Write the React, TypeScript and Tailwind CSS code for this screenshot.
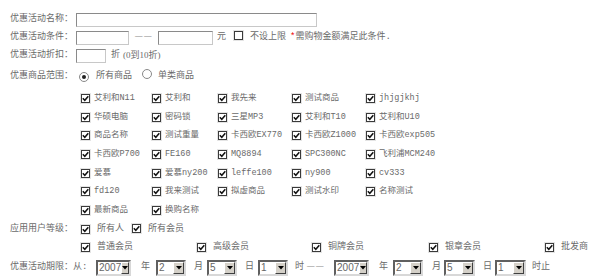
import React from "react";

const products = [
  ["艾利和N11", "艾利和", "我先来", "测试商品", "jhjgjkhj"],
  ["华硕电脑", "密码锁", "三星MP3", "艾利和T10", "艾利和U10"],
  ["商品名称", "测试重量", "卡西欧EX770", "卡西欧Z1000", "卡西欧exp505"],
  ["卡西欧P700", "FE160", "MQ8894", "SPC300NC", "飞利浦MCM240"],
  ["爱慕", "爱慕ny200", "leffe100", "ny900", "cv333"],
  ["fd120", "我来测试", "拟虚商品", "测试水印", "名称测试"],
  ["最新商品", "换购名称"],
];

const levels = ["普通会员", "高级会员", "铜牌会员", "银章会员", "批发商"];

const dash = { fontFamily: "'Liberation Sans', sans-serif" };

function Box({ checked = true }: { checked?: boolean }) {
  return (
    <span className="inline-flex h-[11px] w-[11px] shrink-0 items-center justify-center border border-[#e4e4e4] bg-[#f6f6f6]">
      <span className="flex h-[9px] w-[9px] items-center justify-center border border-[#3a3a3a] bg-white">
        {checked && (
          <svg width="7" height="7" viewBox="0 0 7 7">
            <path d="M0.8 3.2 L2.8 5.3 L6.3 1.2" stroke="#111" strokeWidth="1.5" fill="none" />
          </svg>
        )}
      </span>
    </span>
  );
}

function Radio({ on }: { on?: boolean }) {
  return (
    <span className="inline-flex h-[10px] w-[10px] shrink-0 items-center justify-center rounded-full border border-[#888] bg-white">
      {on && <span className="h-[4px] w-[4px] rounded-full bg-[#222]" />}
    </span>
  );
}

function Field({ w }: { w: string }) {
  return (
    <span
      className={
        "inline-block h-[14px] border border-t-[#8a8a8a] border-l-[#8a8a8a] border-b-[#c8c8c8] border-r-[#c8c8c8] bg-white " +
        w
      }
    />
  );
}

function Sel({ v, w }: { v: string; w: string }) {
  return (
    <span
      className={
        "inline-flex h-[16px] shrink-0 items-stretch border-2 border-t-[#606060] border-l-[#606060] border-b-[#d8d8d8] border-r-[#d8d8d8] bg-white " +
        w
      }
    >
      <span className="flex-1 pl-[1px] text-[10px] leading-[12px] text-[#666]" style={{ fontFamily: "'Liberation Sans', sans-serif" }}>
        {v}
      </span>
      <span className="flex w-[11px] items-center justify-center border border-t-white border-l-white border-b-[#404040] border-r-[#404040] bg-[#d4d0c8]">
        <svg width="6" height="4" viewBox="0 0 6 4">
          <path d="M0 0 H6 L3 3.5 Z" fill="#000" />
        </svg>
      </span>
    </span>
  );
}

export default function App() {
  return (
    <div
      className="h-[279px] w-[600px] overflow-hidden bg-white pl-[10px] pt-[11px] text-[9px] text-[#6a6a6a]"
      style={{ fontFamily: "'Liberation Mono', 'Noto Sans CJK SC', monospace" }}
    >
      <div className="flex h-[18px] items-center">
        <span className="w-[66px]">优惠活动名称：</span>
        <Field w="w-[241px]" />
      </div>
      <div className="flex h-[18px] items-center">
        <span className="w-[66px]">优惠活动条件：</span>
        <Field w="w-[53px]" />
        <span className="ml-[6px] w-[23px] -translate-y-[2px] whitespace-nowrap text-[7.5px] tracking-[1.5px] text-[#888]" style={dash}>——</span>
        <Field w="w-[55px]" />
        <span className="ml-[4px]">元</span>
        <span className="ml-[7px]"><Box checked={false} /></span>
        <span className="ml-[6px]">不设上限</span>
        <span className="ml-[4px] text-[#e00]">*</span>
        <span>需购物金额满足此条件.</span>
      </div>
      <div className="flex h-[17px] items-center">
        <span className="w-[66px]">优惠活动折扣：</span>
        <Field w="w-[30px]" />
        <span className="ml-[5px]">折</span>
        <span className="ml-[3px]" style={{ fontFamily: "'Liberation Serif', 'Noto Sans CJK SC', serif" }}>(0到10折)</span>
      </div>
      <div className="flex h-[25px] items-center">
        <span className="w-[69px]">优惠商品范围：</span>
        <Radio on />
        <span className="ml-[7px]">所有商品</span>
        <span className="ml-[10px]"><Radio /></span>
        <span className="ml-[6px]">单类商品</span>
      </div>
      <div className="ml-[70px] grid grid-cols-[71px_66px_74px_74px_1fr] auto-rows-[18.7px] text-[8.5px]">
        {products.flat().map((p, i) => (
          <div key={i} className="flex items-center gap-[3px]">
            <Box />
            <span className="whitespace-nowrap">{p}</span>
          </div>
        ))}
      </div>
      <div className="flex h-[20px] items-center">
        <span className="w-[70px]">应用用户等级：</span>
        <Box />
        <span className="ml-[6px]">所有人</span>
        <span className="ml-[7px]"><Box /></span>
        <span className="ml-[6px]">所有会员</span>
      </div>
      <div className="ml-[70px] grid h-[16px] grid-cols-[116px_115px_117px_116px_1fr] items-center">
        {levels.map((l) => (
          <div key={l} className="flex items-center gap-[6px]">
            <Box />
            <span>{l}</span>
          </div>
        ))}
      </div>
      <div className="flex h-[24px] items-center whitespace-nowrap">
        <span className="w-[63px]">优惠活动期限：</span>
        <span className="w-[23px]">从:</span>
        <Sel v="2007" w="w-[35px]" />
        <span className="ml-[10px] mr-[6px]">年</span>
        <Sel v="2" w="w-[30px]" />
        <span className="ml-[8px] mr-[4px]">月</span>
        <Sel v="5" w="w-[30px]" />
        <span className="ml-[8px] mr-[4px]">日</span>
        <Sel v="1" w="w-[30px]" />
        <span className="ml-[7px]">时</span>
        <span className="ml-[3px] w-[27px] -translate-y-[2px] text-[7.5px] tracking-[1.5px] text-[#888]" style={dash}>——</span>
        <Sel v="2007" w="w-[35px]" />
        <span className="ml-[10px] mr-[5px]">年</span>
        <Sel v="2" w="w-[30px]" />
        <span className="ml-[9px] mr-[3px]">月</span>
        <Sel v="5" w="w-[31px]" />
        <span className="ml-[8px] mr-[3px]">日</span>
        <Sel v="1" w="w-[31px]" />
        <span className="ml-[6px]">时止</span>
      </div>
    </div>
  );
}
